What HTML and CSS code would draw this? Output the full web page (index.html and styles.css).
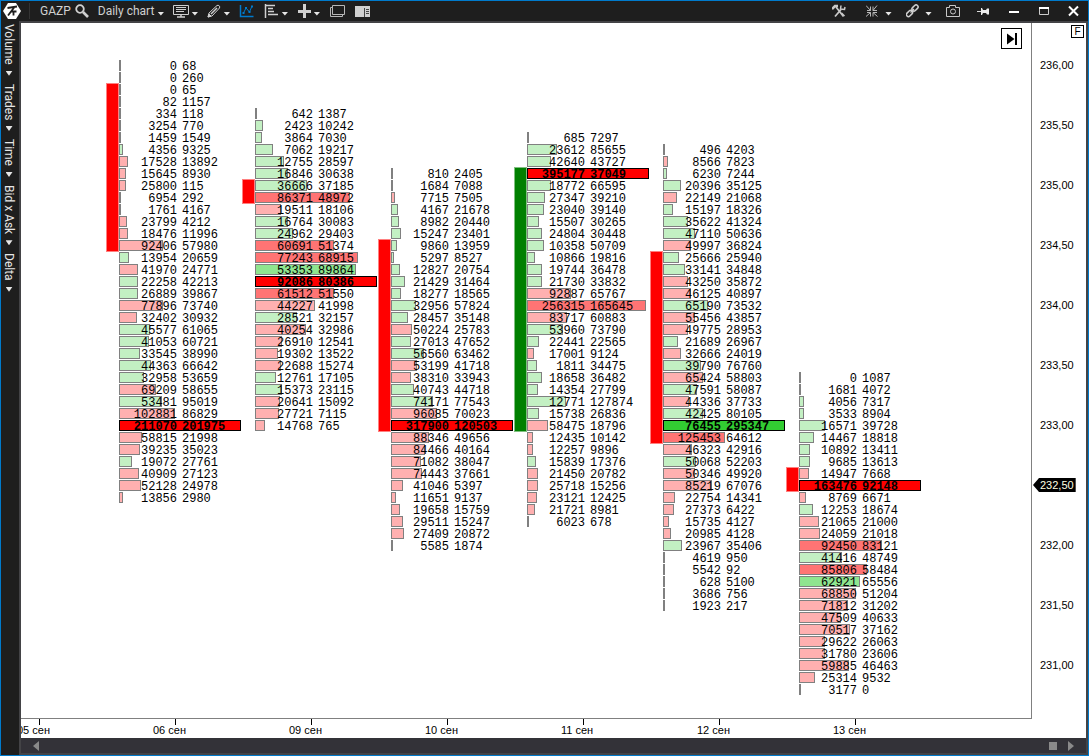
FILE: index.html
```html
<!DOCTYPE html>
<html lang="en">
<head>
<meta charset="utf-8">
<title>GAZP - Daily chart</title>
<link rel="stylesheet" href="styles.css">
</head>
<body>
<div class="window">
  <header class="toolbar">
    <svg class="logo" width="18" height="18" viewBox="0 0 18 18"><path d="M5 1h8L18 9l-5 8H5L0 9z" fill="#fff"/><path d="M4.500 6L14 4.500M5 13.500L11.500 5M8 9.500h5.500M10.500 9.500v4" stroke="#1e1e1e" stroke-width="1.800" fill="none"/></svg>
    <span class="separator"></span>
    <div class="group tools">
      <button class="tool search" aria-label="Find instrument"><span>GAZP</span>
        <svg width="14" height="14" viewBox="0 0 14 14"><circle cx="5" cy="5" r="3.800" fill="none" stroke="#d0d0d0" stroke-width="1.800"/><path d="M8 8l5 5" stroke="#d0d0d0" stroke-width="2.600"/></svg></button>
      <button class="tool period"><span>Daily chart</span><i class="caret"></i></button>
      <button class="tool" aria-label="Display">
        <svg width="17" height="14" viewBox="0 0 17 14" fill="none" stroke="#d0d0d0"><path d="M.5 1.500h15v9H.5z"/><path d="M3 3.500h10M3 5.500h10M3 7.500h8"/><path d="M8 11v2M4 13h8" stroke-width="1.500"/></svg><i class="caret"></i></button>
      <button class="tool" aria-label="Drawing">
        <svg width="15" height="14" viewBox="0 0 15 14" fill="none" stroke="#d0d0d0"><path d="M1 13l1-4 8-7.500c1.500-1 3.500 1 2.500 2.500L5 12z"/><path d="M4 10l6-6" stroke-width="1.500"/><path d="M1 13l1-3 2 2z" fill="#d0d0d0"/></svg><i class="caret"></i></button>
      <button class="tool" aria-label="Indicators">
        <svg width="16" height="14" viewBox="0 0 16 14" fill="none" stroke="#007acc"><path d="M1.500 1v11.500h13" stroke-width="1.500"/><path d="M4.500 9L7 4l3.500 4L13 2"/><path d="M3.500 8h2v2h-2zM6 3h2v2H6zM9.500 7h2v2h-2zM12 1.500h2v2h-2z" fill="#007acc" stroke="none"/></svg></button>
      <button class="tool" aria-label="Volume profile">
        <svg width="16" height="16" viewBox="0 0 16 16" fill="none" stroke="#d0d0d0"><path d="M1.500 1v14M2 2.500h9M4 5.500h5M4 8.500h6M4 11.500h10" stroke-width="1.500"/></svg><i class="caret"></i></button>
      <button class="tool" aria-label="Add">
        <svg width="15" height="14" viewBox="0 0 15 14" stroke="#d0d0d0" stroke-width="3"><path d="M7.500 0v14M1 7.500h13"/></svg><i class="caret"></i></button>
      <button class="tool" aria-label="Windows">
        <svg width="17" height="14" viewBox="0 0 17 14" fill="none" stroke="#b8b8b8"><path d="M3.500 1.500h12v9h-12z"/><path d="M3 3.500H1.500v9h12V11"/></svg></button>
      <button class="tool" aria-label="Side panel">
        <svg width="15" height="13" viewBox="0 0 15 13"><path d="M0 1h15v11H0z" fill="#d0d0d0"/><path d="M9.500 3v9M11 4.500h3M11 6.500h3M11 8.500h3" stroke="#444"/></svg></button>
    </div>
    <div class="group system">
      <button class="tool" aria-label="Settings">
        <svg width="20" height="14" viewBox="0 0 20 14" fill="none" stroke="#c8c8c8"><path d="M0 5l3-3h3" stroke-width="2.500"/><path d="M4 3l7.500 9.500M9 5.500L3 12.500" stroke-width="1.800"/><path d="M9 1.500L8.500 5l4 .5L13 3M9.500 9l3 3" stroke-width="1.500"/></svg></button>
      <button class="tool wide" aria-label="Collapse">
        <svg width="14" height="14" viewBox="0 0 14 14" fill="none" stroke="#b8b8b8"><path d="M0 1.500l4.500 5M4.500 2.500v4H1M11 1.500l-4 5M7 2.500v4h4M0 12.500l4.500-4M1 8.500h3.500v4M11.500 12.500L7 8.500M7 12.500v-4h4"/></svg><i class="caret"></i></button>
      <button class="tool wide" aria-label="Link windows">
        <svg width="14" height="14" viewBox="0 0 14 14" fill="none" stroke="#d0d0d0" stroke-width="1.500"><rect x="-3.500" y="-2" width="7" height="4" rx="2" transform="translate(3.500 9.500) rotate(-45)"/><rect x="-3.500" y="-2" width="7" height="4" rx="2" transform="translate(9 4) rotate(-45)"/><path d="M4.500 8.500l3.500-3.500"/></svg><i class="caret"></i></button>
      <button class="tool" aria-label="Screenshot">
        <svg width="16" height="14" viewBox="0 0 16 14" fill="none" stroke="#c8c8c8"><path d="M.5 3.500h3V1.500h6v2h4v9H.5z"/><circle cx="7" cy="7.500" r="2.500"/></svg></button>
      <button class="tool" aria-label="Pin">
        <svg width="16" height="10" viewBox="0 0 16 10"><path d="M1 5.500h5" stroke="#ddd"/><path d="M5 2h1l1 2h3l1-1.500h2v6h-2L10 7H7L6 9H5z" fill="#eee"/></svg></button>
      <button class="tool" aria-label="Minimize">
        <svg width="16" height="12" viewBox="0 0 16 12"><path d="M3 7h10" stroke="#fff" stroke-width="2"/></svg></button>
      <button class="tool" aria-label="Maximize">
        <svg width="16" height="12" viewBox="0 0 16 12" fill="none" stroke="#ccc"><path d="M3.500 3v6.500h9V3"/><path d="M3 3h10" stroke="#fff" stroke-width="2"/></svg></button>
      <button class="tool" aria-label="Close">
        <svg width="16" height="12" viewBox="0 0 16 12"><path d="M3 1.500l9 9M12 1.500l-9 9" stroke="#fff" stroke-width="2"/></svg></button>
    </div>
  </header>

  <nav class="sidebar">
    <button class="metric">Volume<i class="caret"></i></button>
    <button class="metric">Trades<i class="caret"></i></button>
    <button class="metric">Time<i class="caret"></i></button>
    <button class="metric">Bid x Ask<i class="caret"></i></button>
    <button class="metric">Delta<i class="caret"></i></button>
  </nav>

  <main class="chart">
    <section class="plot" id="plot">
      <button class="latest" aria-label="Go to latest">
        <svg width="12" height="12" viewBox="0 0 12 12"><path d="M1 0.500l7.500 5.500L1 11.500z"/><path d="M9 0h2v12H9z"/></svg></button>
    </section>
    <aside class="prices">
      <button class="fix">F</button>
      <ul>
        <li>236,00</li>
        <li>235,50</li>
        <li>235,00</li>
        <li>234,50</li>
        <li>234,00</li>
        <li>233,50</li>
        <li>233,00</li>
        <li class="current"><span class="tag">232,50</span></li>
        <li>232,00</li>
        <li>231,50</li>
        <li>231,00</li>
      </ul>
    </aside>
    <ul class="dates">
      <li>05 сен</li>
      <li>06 сен</li>
      <li>09 сен</li>
      <li>10 сен</li>
      <li>11 сен</li>
      <li>12 сен</li>
      <li>13 сен</li>
    </ul>
    <div class="scroll">
      <button class="step" aria-label="Scroll left"><svg width="6" height="10" viewBox="0 0 6 10"><path d="M6 0v10L0 5z" fill="#8a8a8a"/></svg></button>
      <button class="thumb" aria-label="Position"></button>
      <button class="step" aria-label="Scroll right"><svg width="6" height="10" viewBox="0 0 6 10"><path d="M0 0v10l6-5z" fill="#8a8a8a"/></svg></button>
    </div>
  </main>
</div>
<script src="chart.js"></script>
</body>
</html>
```
FILE: styles.css
```css
* { box-sizing: border-box; }

body {
  margin: 0;
  font-family: "Liberation Sans", Arial, sans-serif;
  font-size: 11px;
  color: #000;
}

ul { margin: 0; padding: 0; list-style: none; }

button {
  margin: 0;
  padding: 0;
  border: 0;
  background: none;
  color: inherit;
  font: inherit;
}

svg { display: block; flex: none; }

.window {
  display: grid;
  grid-template: 20px 1fr / 18px 1fr;
  height: 100vh;
  border: 1px solid #007acc;
  background: #1e1e1e;
  overflow: hidden;
}

/* Toolbar */
.toolbar {
  grid-column: 1 / -1;
  display: flex;
  align-items: center;
  padding: 0 6px 0 2px;
  color: #d0d0d0;
  font-family: Roboto, sans-serif;
  font-size: 12px;
}
.separator { width: 1px; height: 16px; margin: 0 10px 0 8px; background: #333; }
.group { display: flex; align-items: center; }
.tools { gap: 9px; }
.system { gap: 14px; margin-left: auto; }
.tool { display: flex; align-items: center; gap: 1px; white-space: nowrap; }
.search { gap: 4px; }
.period { gap: 3px; }
.wide { gap: 5px; }
.caret {
  width: 7px;
  height: 4px;
  margin-top: 5px;
  background: #e6e6e6;
  clip-path: polygon(0 0, 100% 0, 50% 100%);
}

/* Sidebar */
.sidebar {
  display: flex;
  flex-direction: column;
  gap: 8px;
  padding-top: 3px;
  color: #e6e6e6;
  font-family: Roboto, sans-serif;
  font-size: 12px;
}
.metric {
  display: flex;
  align-items: center;
  gap: 6px;
  width: 16px;
  line-height: 16px;
  writing-mode: vertical-rl;
}
.metric .caret { height: 5px; margin: 0; }

/* Chart */
.chart {
  display: grid;
  grid-template: 1fr 19px 15px / 1fr 54px;
  min-width: 0;
  border: 2px solid #434346;
  background: #fff;
}
.plot {
  position: relative;
  display: flex;
  align-items: flex-start;
  padding: 37px 0 0 85px;
  border: solid #808080;
  border-width: 0 1px 1px 0;
  overflow: hidden;
}
.latest {
  position: absolute;
  top: 5px;
  right: 9px;
  display: grid;
  place-items: center;
  width: 21px;
  height: 21px;
  border: 1px solid #000;
}

.cluster {
  display: grid;
  grid-template-columns: 13px 122px;
  grid-auto-rows: 12px;
  flex: none;
  width: 136px;
}
.candle {
  grid-column: 1;
  margin-top: -1px;
  border: 1px solid #ff8080;
  background: #f00;
}
.candle.up { border-color: #80c080; background: #008000; }

.level {
  grid-column: 2;
  display: grid;
  height: 11px;
  font-family: "Liberation Mono", monospace;
  font-size: 12px;
  line-height: 14px;
}
.bar, .quotes { grid-area: 1 / 1; }
.bar { height: 11px; border: 1px solid #808080; background: #c3f0c3; }
.bar.sell { background: #ffb0b0; }
.bar.heavy { background: #8fe58f; }
.bar.heavy.sell { background: #ff7474; }
.peak { font-weight: 700; }
.peak .bar.heavy { border-color: #000; background: #32cd32; }
.peak .bar.heavy.sell { background: #f00; }
.quotes { display: grid; grid-template-columns: 58px auto; column-gap: 5px; height: 11px; }
.bid { justify-self: end; }

.prices { position: relative; grid-area: 1 / 2 / 3 / 3; }
.prices ul { padding-top: 12px; }
.prices li { height: 60px; padding-left: 8px; line-height: 60px; }
.prices .current { display: flex; align-items: center; padding-left: 1px; }
.prices .tag {
  padding: 0 2px 0 7px;
  background: #000;
  color: #ffffe0;
  line-height: 14px;
  clip-path: polygon(0 50%, 6px 0, 100% 0, 100% 100%, 6px 100%);
}
.fix {
  position: absolute;
  top: 2px;
  right: 2px;
  width: 13px;
  height: 13px;
  border: 1px solid #000;
  line-height: 11px;
  font-size: 10px;
}

.dates {
  grid-column: 1;
  grid-row: 2;
  display: flex;
  overflow: hidden;
}
.dates li { flex: none; width: 136px; line-height: 11px; }
.dates li:first-child { margin-left: -4px; }
.dates li::before {
  content: "";
  display: block;
  width: 1px;
  height: 6px;
  margin-left: 22px;
  background: #000;
}

.scroll {
  grid-column: 1 / -1;
  display: flex;
  align-items: center;
  padding: 0 12px;
  background: #333238;
}
.thumb { width: 8px; height: 8px; margin: 0 11px 0 auto; background: #8a8a8a; }
```
FILE: chart.js
```js
// Each cluster: first price level, candle span in levels, direction, bid/ask pairs.
const ROWS_WIDTH = 122;
const clusters = [
  { start: 0, open: 2, close: 16, up: false, levels: "0 68,0 260,0 65,82 1157,334 118,3254 770,1459 1549,4356 9325,17528 13892,15645 8930,25800 115,6954 292,1761 4167,23799 4212,18476 11996,92406 57980,13954 20659,41970 24771,22258 42213,26889 39867,77896 73740,32402 30932,45577 61065,41053 60721,33545 38990,44363 66642,32958 53659,69209 58655,53481 95019,102881 86829,211070 201975,58815 21998,39235 35023,19072 27761,40909 27123,52128 24978,13856 2980" },
  { start: 4, open: 10, close: 12, up: false, levels: "642 1387,2423 10242,3864 7030,7062 19217,12755 28597,16846 30638,36666 37185,86371 48972,19511 18106,16764 30083,24962 29403,60691 51374,77243 68915,53353 89864,92086 80386,61512 51550,44227 41998,28521 32157,40254 32986,26910 12541,19302 13522,22688 15274,12761 17105,15373 23115,20641 15092,27721 7115,14768 765" },
  { start: 9, open: 15, close: 31, up: false, levels: "810 2405,1684 7088,7715 7505,4167 21678,8982 20440,15247 23401,9860 13959,5297 8527,12827 20754,21429 31464,18277 18565,32956 57824,28457 35148,50224 25783,27013 47652,56560 63462,53199 41718,38310 33943,40743 44718,74171 77543,96085 70023,317900 120503,88346 49656,84466 40164,71082 38047,74443 37661,41046 5397,11651 9137,19658 15759,29511 15247,27409 20872,5585 1874" },
  { start: 6, open: 9, close: 31, up: true, levels: "685 7297,23612 85655,42640 43727,395177 37049,18772 66595,27347 39210,23040 39140,15507 30265,24804 30448,10358 50709,10866 19816,19744 36478,21730 33832,92887 65767,256315 165645,83717 60883,53960 73790,22441 22565,17001 9124,1811 34475,18658 36482,14354 27799,12771 127874,15738 26836,58475 18796,12435 10142,12257 9896,15839 17376,21450 20782,25718 15256,23121 12425,21721 8981,6023 678" },
  { start: 7, open: 16, close: 32, up: false, levels: "496 4203,8566 7823,6230 7244,20396 35125,22149 21068,15197 18326,35622 41324,47110 50636,49997 36824,25666 25940,33141 34848,43250 35872,46125 40897,65190 73532,55456 43857,49775 28953,21689 26967,32666 24019,39790 76760,65424 58803,47591 58087,44336 37733,42425 80105,76455 295347,125453 64612,46323 42916,50068 52203,50346 49920,85219 67076,22754 14341,27373 6422,15735 4127,20985 4128,23967 35406,4619 950,5542 92,628 5100,3686 756,1923 217" },
  { start: 26, open: 34, close: 36, up: false, levels: "0 1087,1681 4072,4056 7317,3533 8904,16571 39728,14467 18818,10892 13411,9685 13613,14947 7668,163476 92148,8769 6671,12253 18674,21065 21000,24059 21018,92450 83121,41416 48749,85806 58484,62921 65556,68850 51204,71812 31202,47509 40633,70517 37162,29622 26063,31780 23606,59885 46463,25314 9532,3177 0" }
];

function element(className, parent) {
  const node = document.createElement("div");
  node.className = className;
  parent.append(node);
  return node;
}

const plot = document.getElementById("plot");

for (const data of clusters) {
  const cluster = element("cluster", plot);
  const candle = element(data.up ? "candle up" : "candle", cluster);
  candle.style.gridRow = `${data.open + 1} / ${data.close + 1}`;

  const levels = data.levels.split(",").map(pair => pair.split(" ").map(Number));
  const peak = Math.max(...levels.map(([bid, ask]) => bid + ask));

  levels.forEach(([bid, ask], index) => {
    const share = (bid + ask) / peak;
    const level = element(share === 1 ? "level peak" : "level", cluster);
    level.style.gridRow = data.start + index + 1;

    const bar = element("bar", level);
    bar.classList.toggle("sell", bid > ask);
    bar.classList.toggle("heavy", share > 0.5);
    bar.style.width = `${Math.max(2, Math.floor(share * ROWS_WIDTH))}px`;

    const quotes = element("quotes", level);
    element("bid", quotes).textContent = bid;
    element("ask", quotes).textContent = ask;
  });
}
```
